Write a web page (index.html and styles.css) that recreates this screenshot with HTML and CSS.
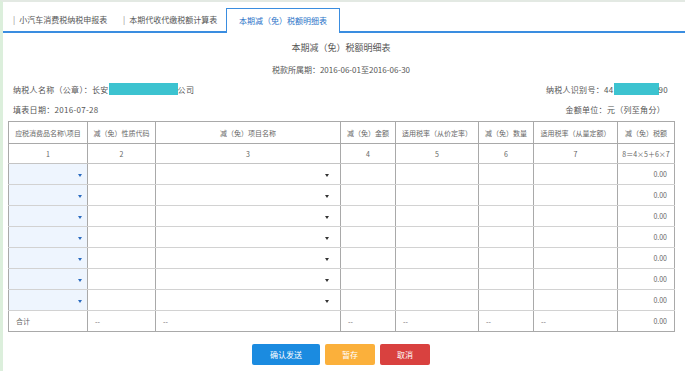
FILE: index.html
```html
<!DOCTYPE html>
<html lang="zh">
<head>
<meta charset="utf-8">
<link rel="stylesheet" href="styles.css">
</head>
<body>
<div class="page">
  <div class="tabs">
    <div class="tab tab-1"><span class="sep">|</span>小汽车消费税纳税申报表</div>
    <div class="tab tab-2"><span class="sep">|</span>本期代收代缴税额计算表</div>
    <div class="tab active">本期减（免）税额明细表</div>
  </div>
  <div class="content">
    <div class="title">本期减（免）税额明细表</div>
    <div class="period">税款所属期：2016-06-01至2016-06-30</div>
    <div class="info">
      <div>纳税人名称（公章）：长安<span class="mask mask-name"></span>公司</div>
      <div>纳税人识别号：44<span class="mask mask-id"></span>90</div>
    </div>
    <div class="info info-2">
      <div>填表日期：2016-07-28</div>
      <div>金额单位：元（列至角分）</div>
    </div>
    <table class="grid">
      <colgroup>
        <col class="c1"><col class="c2"><col class="c3"><col class="c4"><col class="c5"><col class="c6"><col class="c7"><col class="c8">
      </colgroup>
      <tr class="head">
        <td>应税消费品名称\项目</td><td>减（免）性质代码</td><td>减（免）项目名称</td><td>减（免）金额</td><td>适用税率（从价定率）</td><td>减（免）数量</td><td>适用税率（从量定额）</td><td>减（免）税额</td>
      </tr>
      <tr class="nums">
        <td>1</td><td>2</td><td>3</td><td>4</td><td>5</td><td>6</td><td>7</td><td>8＝4×5＋6×7</td>
      </tr>
      <tr class="data"><td class="sel"><i class="tri blue"></i></td><td></td><td class="sel2"><i class="tri"></i></td><td></td><td></td><td></td><td></td><td class="amt">0.00</td></tr>
      <tr class="data"><td class="sel"><i class="tri blue"></i></td><td></td><td class="sel2"><i class="tri"></i></td><td></td><td></td><td></td><td></td><td class="amt">0.00</td></tr>
      <tr class="data"><td class="sel"><i class="tri blue"></i></td><td></td><td class="sel2"><i class="tri"></i></td><td></td><td></td><td></td><td></td><td class="amt">0.00</td></tr>
      <tr class="data"><td class="sel"><i class="tri blue"></i></td><td></td><td class="sel2"><i class="tri"></i></td><td></td><td></td><td></td><td></td><td class="amt">0.00</td></tr>
      <tr class="data"><td class="sel"><i class="tri blue"></i></td><td></td><td class="sel2"><i class="tri"></i></td><td></td><td></td><td></td><td></td><td class="amt">0.00</td></tr>
      <tr class="data"><td class="sel"><i class="tri blue"></i></td><td></td><td class="sel2"><i class="tri"></i></td><td></td><td></td><td></td><td></td><td class="amt">0.00</td></tr>
      <tr class="data"><td class="sel"><i class="tri blue"></i></td><td></td><td class="sel2"><i class="tri"></i></td><td></td><td></td><td></td><td></td><td class="amt">0.00</td></tr>
      <tr class="total"><td>合计</td><td>--</td><td>--</td><td>--</td><td>--</td><td>--</td><td>--</td><td class="amt">0.00</td></tr>
    </table>
    <div class="buttons">
      <button class="btn btn-send">确认发送</button>
      <button class="btn btn-save">暂存</button>
      <button class="btn btn-cancel">取消</button>
    </div>
  </div>
</div>
</body>
</html>
```

FILE: styles.css
```css
html, body {
  margin: 0;
  padding: 0;
  background: #ffffff;
}
body {
  font-family: "Noto Sans CJK SC", "Microsoft YaHei", sans-serif;
  color: #555;
}
.page {
  border-left: 3px solid #dcefdc;
  border-top: 2px solid #e3e9e3;
  height: 371px;
  box-sizing: border-box;
}
.tabs {
  display: flex;
  align-items: flex-end;
  height: 29px;
  padding-left: 10px;
  border-bottom: 2px solid #3a8de0;
}
.tab {
  font-size: 8px;
  color: #555;
  height: 22px;
  line-height: 22px;
  white-space: nowrap;
  box-sizing: border-box;
}
.tab-1 { width: 110px; }
.tab-2 { width: 103px; }
.sep {
  color: #888;
  margin-right: 4px;
}
.active {
  width: 114px;
  line-height: 24px;
  text-align: center;
  color: #2a72c8;
  background: #fff;
  border: 1px solid #3a8de0;
  border-bottom: none;
  margin-bottom: -2px;
  height: 25px;
}
.content {
  padding: 0 11px 0 5px;
}
.title {
  margin-top: 4px;
  height: 22px;
  line-height: 22px;
  text-align: center;
  font-size: 9px;
  color: #555;
}
.period {
  height: 21px;
  line-height: 21px;
  text-align: center;
  font-size: 8px;
  color: #555;
}
.info {
  display: flex;
  justify-content: space-between;
  height: 20px;
  line-height: 20px;
  font-size: 8px;
  color: #555;
  padding: 0 6px 0 5px;
  letter-spacing: 0.3px;
}
.info-2 { padding-right: 9px; }
.mask {
  display: inline-block;
  height: 12px;
  vertical-align: -2px;
  background: #3cc3d0;
}
.mask-name { width: 69px; }
.mask-id { width: 45px; }
.grid {
  margin-top: 1px;
  border-collapse: collapse;
  table-layout: fixed;
  width: 666px;
  font-size: 7px;
  color: #666;
}
.c1 { width: 79px; }
.c2 { width: 68px; }
.c3 { width: 185px; }
.c4 { width: 55px; }
.c5 { width: 83px; }
.c6 { width: 55px; }
.c7 { width: 84px; }
.c8 { width: 57px; }
.grid td {
  border: 1px solid #a9a9a9;
  padding: 0;
  white-space: nowrap;
  overflow: hidden;
}
.head td {
  height: 21px;
  text-align: center;
}
.nums td {
  height: 19px;
  text-align: center;
  border-bottom-color: #c4c4c4;
}
.data td {
  height: 20px;
  border-top-color: #d2d2d2;
  border-bottom-color: #d2d2d2;
}
.data td.sel {
  background: #eef5fe;
  text-align: right;
  padding-right: 5px;
}
.data td.sel2 {
  text-align: right;
  padding-right: 11px;
}
.tri {
  display: inline-block;
  width: 0;
  height: 0;
  border-left: 2px solid transparent;
  border-right: 2px solid transparent;
  border-top: 3px solid #333;
  vertical-align: middle;
}
.tri.blue { border-top-color: #2a6bc0; }
.total td {
  height: 20px;
  padding-left: 7px;
  border-top-color: #a9a9a9;
}
.grid td.amt {
  text-align: right;
  padding-right: 7px;
  padding-left: 0;
}
.buttons {
  display: flex;
  justify-content: center;
  gap: 5px;
  margin-top: 12px;
}
.btn {
  border: none;
  border-radius: 2px;
  height: 21px;
  color: #fff;
  font-family: "Noto Sans CJK SC", sans-serif;
  font-size: 8px;
  padding: 0;
}
.btn-send { width: 68px; background: #1b8be0; }
.btn-save { width: 50px; background: #fbb03b; }
.btn-cancel { width: 50px; background: #d9413f; }
```
